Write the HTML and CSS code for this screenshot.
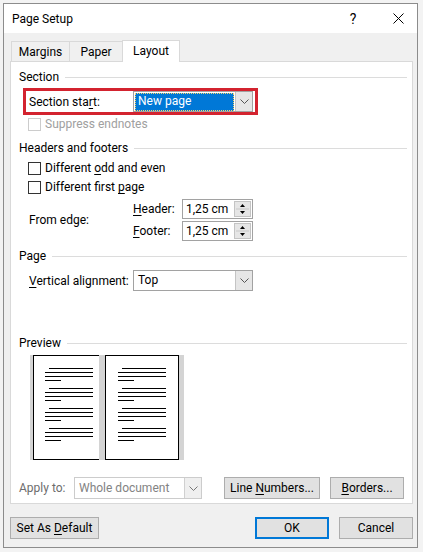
FILE: index.html
```html
<!DOCTYPE html>
<html>
<head>
<meta charset="utf-8">
<link rel="stylesheet" href="styles.css">
</head>
<body>
<div class="window">
  <div class="titlebar">
    <span class="title">Page Setup</span>
    <span class="help">?</span>
    <span class="close"><svg width="11" height="11" viewBox="0 0 11 11"><path d="M0.5 0.5 L10.5 10.5 M10.5 0.5 L0.5 10.5" stroke="#000" stroke-width="1" fill="none"/></svg></span>
  </div>
  <div class="body">
    <div class="tabs">
      <div class="tab tab-margins"><span>Margins</span></div>
      <div class="tab tab-paper"><span>Paper</span></div>
      <div class="tab tab-layout active"><span>Layout</span></div>
    </div>
    <div class="panel">
      <div class="group-title g-section"><span>Section</span></div>
      <div class="redbox">
        <span class="field-label">Section sta<u>r</u>t:</span>
        <div class="combo">
          <span class="combo-value selected">New page</span>
          <span class="combo-btn"><svg width="9" height="5" viewBox="0 0 9 5"><path d="M0.5 0.5 L4.5 4.5 L8.5 0.5" stroke="#555" stroke-width="1" fill="none"/></svg></span>
        </div>
      </div>
      <div class="check disabled c-suppress"><span class="box"></span><span class="check-text">Suppress endnotes</span></div>

      <div class="group-title g-headers"><span>Headers and footers</span></div>
      <div class="check c-odd"><span class="box"></span><span class="check-text">Different <u>o</u>dd and even</span></div>
      <div class="check c-first"><span class="box"></span><span class="check-text">Different first <u>p</u>age</span></div>
      <div class="edge">
        <span class="field-label">From edge:</span>
        <div class="edge-fields">
          <div class="edge-row">
            <span class="edge-label"><u>H</u>eader:</span>
            <div class="spin">
              <span class="spin-value">1,25 cm</span>
              <span class="spin-btn"><svg width="15" height="16" viewBox="0 0 15 16"><path d="M5 6 L10 6 L7.5 3 Z" fill="#000"/><path d="M1 8 L14 8" stroke="#c8c8c8" stroke-width="1"/><path d="M5 10 L10 10 L7.5 13 Z" fill="#000"/></svg></span>
            </div>
          </div>
          <div class="edge-row">
            <span class="edge-label"><u>F</u>ooter:</span>
            <div class="spin">
              <span class="spin-value">1,25 cm</span>
              <span class="spin-btn"><svg width="15" height="16" viewBox="0 0 15 16"><path d="M5 6 L10 6 L7.5 3 Z" fill="#000"/><path d="M1 8 L14 8" stroke="#c8c8c8" stroke-width="1"/><path d="M5 10 L10 10 L7.5 13 Z" fill="#000"/></svg></span>
            </div>
          </div>
        </div>
      </div>

      <div class="group-title g-page"><span>Page</span></div>
      <div class="valign">
        <span class="field-label"><u>V</u>ertical alignment:</span>
        <div class="combo">
          <span class="combo-value">Top</span>
          <span class="combo-btn"><svg width="9" height="5" viewBox="0 0 9 5"><path d="M0.5 0.5 L4.5 4.5 L8.5 0.5" stroke="#555" stroke-width="1" fill="none"/></svg></span>
        </div>
      </div>

      <div class="group-title g-preview"><span>Preview</span></div>
      <div class="preview">
        <div class="page page-left">
          <div class="para"><i class="ln ind"></i><i class="ln"></i><i class="ln"></i><i class="ln short"></i></div>
          <div class="para"><i class="ln ind"></i><i class="ln"></i><i class="ln"></i><i class="ln short"></i></div>
          <div class="para"><i class="ln ind"></i><i class="ln"></i><i class="ln"></i><i class="ln short"></i></div>
          <div class="para"><i class="ln ind"></i><i class="ln"></i><i class="ln"></i><i class="ln short"></i></div>
        </div>
        <div class="spine"></div>
        <div class="page page-right">
          <div class="para"><i class="ln ind"></i><i class="ln"></i><i class="ln"></i><i class="ln short"></i></div>
          <div class="para"><i class="ln ind"></i><i class="ln"></i><i class="ln"></i><i class="ln short"></i></div>
          <div class="para"><i class="ln ind"></i><i class="ln"></i><i class="ln"></i><i class="ln short"></i></div>
          <div class="para"><i class="ln ind"></i><i class="ln"></i><i class="ln"></i><i class="ln short"></i></div>
        </div>
      </div>

      <div class="apply-row">
        <span class="apply-label">Apply to:</span>
        <div class="combo combo-disabled">
          <span class="combo-value">Whole document</span>
          <span class="combo-btn"><svg width="9" height="5" viewBox="0 0 9 5"><path d="M0.5 0.5 L4.5 4.5 L8.5 0.5" stroke="#777" stroke-width="1" fill="none"/></svg></span>
        </div>
        <div class="btn btn-linenum"><span>Line <u>N</u>umbers...</span></div>
        <div class="btn btn-borders"><span><u>B</u>orders...</span></div>
      </div>
    </div>
    <div class="footer">
      <div class="btn btn-default"><span>Set As <u>D</u>efault</span></div>
      <div class="spacer"></div>
      <div class="btn btn-ok"><span>OK</span></div>
      <div class="btn btn-cancel"><span>Cancel</span></div>
    </div>
  </div>
</div>
</body>
</html>
```

FILE: styles.css
```css
html, body {
  margin: 0;
  padding: 0;
}
body {
  background: #f3f3f3;
  font-family: Roboto, "Noto Sans", sans-serif;
  font-size: 12px;
  color: #000;
  padding: 3px 0 0 3px;
}
u { text-decoration: underline; text-underline-offset: 2px; }

.window {
  width: 415px;
  height: 545px;
  box-sizing: border-box;
  border: 1px solid #8c8c8c;
  background: #f0f0f0;
  display: flex;
  flex-direction: column;
}
.titlebar {
  flex: none;
  height: 29px;
  background: #fff;
  display: flex;
  align-items: center;
  padding: 0 9px 0 8px;
}
.title { flex: 1; line-height: 16px; }
.help {
  width: 20px;
  text-align: center;
  font-size: 14px;
  margin-right: 25px;
  line-height: 16px;
}
.close {
  width: 20px;
  display: flex;
  justify-content: center;
}

.body {
  flex: 1;
  display: flex;
  flex-direction: column;
  padding: 0 4px 0 6px;
}
.tabs {
  display: flex;
  align-items: flex-end;
  height: 21px;
  margin-top: 7px;
  padding-left: 1px;
}
.tab {
  height: 20px;
  box-sizing: border-box;
  border: 1px solid #d9d9d9;
  border-bottom: none;
  background: #f0f0f0;
  display: flex;
  align-items: center;
  justify-content: center;
  line-height: 16px;
}
.tab-margins { width: 59px; }
.tab-paper { width: 54px; margin-left: -1px; }
.tab-layout { width: 58px; margin-left: -1px; }
.tab.active {
  height: 22px;
  margin-bottom: -1px;
  background: #fff;
  position: relative;
  z-index: 1;
  padding-bottom: 1px;
}

.panel {
  height: 443px;
  box-sizing: border-box;
  border: 1px solid #d9d9d9;
  background: #fff;
  padding: 0 5px 0 8px;
  display: flex;
  flex-direction: column;
}
.group-title {
  display: flex;
  align-items: center;
  gap: 6px;
  height: 16px;
  line-height: 16px;
}
.group-title::after {
  content: "";
  flex: 1;
  height: 1px;
  background: #dcdcdc;
}
.g-section { margin-top: 7px; }
.g-headers { margin-top: 8px; }
.g-page { margin-top: 7px; }
.g-preview { margin-top: 44px; }

.field-label {
  width: 104px;
  flex: none;
  line-height: 16px;
  white-space: nowrap;
}
.redbox {
  margin-top: 3px;
  margin-left: 4px;
  width: 235px;
  height: 27px;
  box-sizing: border-box;
  border: 3px solid #d3232f;
  display: flex;
  align-items: center;
  padding-left: 3px;
}
.combo {
  width: 120px;
  height: 21px;
  box-sizing: border-box;
  border: 1px solid #a2a2a2;
  background: #fff;
  display: flex;
  align-items: stretch;
}
.combo-value {
  flex: 1;
  margin: 1px 1px 0 1px;
  padding-left: 3px;
  line-height: 17px;
  white-space: nowrap;
}
.combo-value.selected {
  background: #0078d7;
  color: #fff;
  outline: 1px dotted #f6d36b;
  outline-offset: -1px;
}
.combo-btn {
  width: 17px;
  flex: none;
  background: #e6e6e6;
  border-left: 1px solid #c4c4c4;
  box-sizing: border-box;
  display: flex;
  align-items: center;
  justify-content: center;
}

.check {
  display: flex;
  align-items: center;
  gap: 4px;
  height: 16px;
  line-height: 16px;
  margin-left: 9px;
}
.check-text { white-space: nowrap; }
.check .box {
  width: 13px;
  height: 13px;
  box-sizing: border-box;
  border: 1px solid #333;
  background: #fff;
  flex: none;
}
.check.disabled { color: #a0a0a0; }
.check.disabled .box { border-color: #cccccc; }
.c-suppress { margin-top: 1px; }
.c-odd { margin-top: 4px; }
.c-first { margin-top: 3px; }

.edge {
  margin-top: 4px;
  margin-left: 10px;
  display: flex;
  align-items: center;
}
.edge-fields {
  display: flex;
  flex-direction: column;
  gap: 2px;
}
.edge-row {
  display: flex;
  align-items: center;
  height: 20px;
}
.edge-label { width: 49px; line-height: 16px; }
.spin {
  width: 71px;
  height: 20px;
  box-sizing: border-box;
  border: 1px solid #a2a2a2;
  display: flex;
}
.spin-value {
  flex: 1;
  padding-left: 3px;
  line-height: 18px;
  white-space: nowrap;
}
.spin-btn {
  width: 17px;
  flex: none;
  margin: 1px;
  background: #e6e6e6;
  border: 1px solid #c4c4c4;
  box-sizing: border-box;
  display: flex;
  align-items: center;
  justify-content: center;
}

.valign {
  margin-top: 6px;
  margin-left: 10px;
  display: flex;
  align-items: center;
}

.preview {
  margin-top: 4px;
  margin-left: 11px;
  width: 154px;
  height: 105px;
  box-sizing: border-box;
  background: #d4d4d4;
  padding: 0 5px 0 3px;
  display: flex;
}
.page {
  background: #fff;
  box-sizing: border-box;
  border: 1px solid #000;
  padding-top: 12px;
  display: flex;
  flex-direction: column;
  gap: 7px;
}
.page-left {
  width: 66px;
  border-right: none;
  padding-left: 11px;
}
.spine { width: 6px; flex: none; }
.page-right {
  width: 74px;
  padding-left: 12px;
}
.para {
  display: flex;
  flex-direction: column;
  gap: 3px;
}
.ln {
  display: block;
  height: 1px;
  width: 48px;
  background: #000;
}
.ln.ind { width: 44px; margin-left: 4px; }
.ln.short { width: 16px; }

.apply-row {
  margin-top: auto;
  margin-bottom: 4px;
  display: flex;
  align-items: center;
  height: 22px;
}
.apply-label {
  width: 55px;
  color: #6d6d6d;
  line-height: 16px;
  white-space: nowrap;
}
.combo-disabled {
  width: 128px;
  height: 22px;
  border-color: #cccccc;
  color: #838383;
}
.combo-disabled .combo-value { line-height: 18px; }
.combo-disabled .combo-btn { background: #efefef; border-left-color: #d0d0d0; }

.btn {
  height: 22px;
  box-sizing: border-box;
  border: 1px solid #adadad;
  background: #e1e1e1;
  display: flex;
  align-items: center;
  justify-content: center;
  line-height: 16px;
  white-space: nowrap;
}
.btn-linenum { width: 96px; margin-left: 22px; }
.btn-borders { width: 74px; margin-left: 10px; }

.footer {
  margin-top: 13px;
  display: flex;
  align-items: center;
}
.spacer { flex: 1; }
.btn-default { width: 89px; }
.btn-ok {
  width: 74px;
  border: 2px solid #0078d7;
}
.btn-cancel { width: 74px; margin-left: 10px; }
```
